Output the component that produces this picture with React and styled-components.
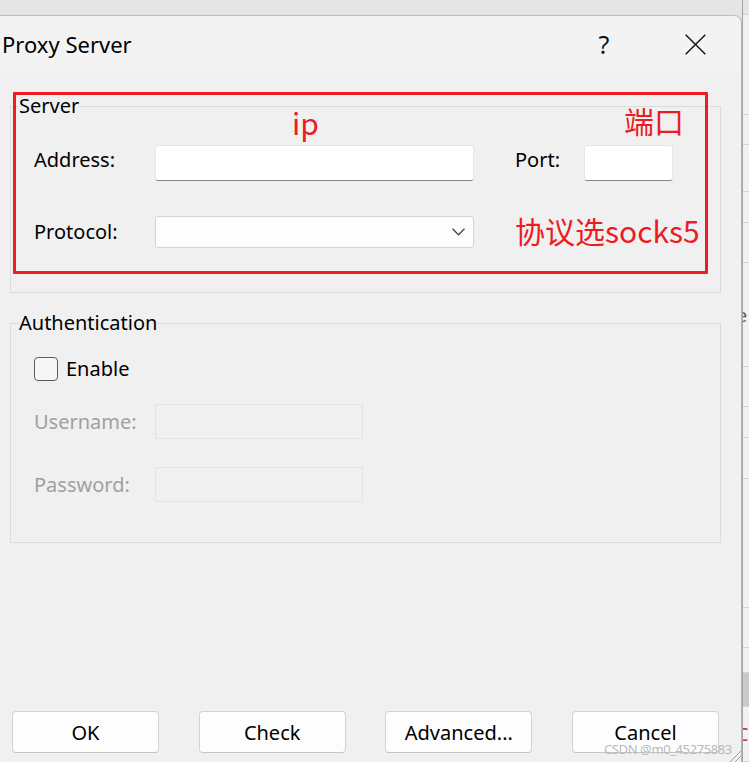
import styled, { createGlobalStyle } from "styled-components";

const GlobalStyle = createGlobalStyle`
  html, body {
    margin: 0;
    padding: 0;
    background: #e5e5e5;
  }
  body {
    font-family: "Noto Sans", "Noto Sans CJK SC", sans-serif;
    color: #000;
  }
  * {
    box-sizing: border-box;
  }
`;

const Screen = styled.div`
  width: 749px;
  height: 762px;
  display: flex;
  align-items: flex-start;
  overflow: hidden;
  background: #e5e5e5;
`;

const Dialog = styled.div`
  position: relative;
  flex: none;
  width: 742px;
  height: 747px;
  margin-top: 15px;
  display: flex;
  flex-direction: column;
  background: #f0f0f0;
  border-top: 1px solid #bdbdbd;
  border-right: 1px solid #b4b4b4;
  border-top-right-radius: 8px;
  overflow: hidden;
`;

const TitleBar = styled.div`
  height: 56px;
  display: flex;
  align-items: center;
  padding: 0 23px 0 2px;
  background: #f3f3f3;
`;

const Title = styled.div`
  flex: 1;
  font-size: 22px;
`;

const CaptionButton = styled.button`
  width: 46px;
  height: 40px;
  margin-left: ${(props) => props.$gap || 0}px;
  display: flex;
  align-items: center;
  justify-content: center;
  padding: 0;
  border: 0;
  background: none;
  font-family: inherit;
  font-size: 25px;
  color: #111;
`;

const Body = styled.div`
  flex: 1;
  display: flex;
  flex-direction: column;
  padding: 22px 20px 9px 10px;
`;

const GroupBox = styled.fieldset`
  margin: ${(props) => props.$top || 0}px 0 0;
  padding: ${(props) => props.$pad};
  min-width: 0;
  border: 1px solid #dcdcdc;
`;

const Legend = styled.legend`
  padding: 0;
  font-size: 20px;
  line-height: 24px;
`;

const ServerGrid = styled.div`
  margin-left: 15px;
  display: grid;
  grid-template-columns: 121px 319px 41px 69px 89px;
  grid-template-rows: 36px 32px;
  row-gap: 35px;
  align-items: center;
`;

const Label = styled.span`
  font-size: 20px;
  line-height: 24px;
  white-space: nowrap;
  color: ${(props) => (props.$disabled ? "#a0a0a0" : "#000")};
  margin-bottom: ${(props) => props.$lift || 0}px;
`;

const TextBox = styled.div`
  height: 36px;
  background: #fff;
  border: 1px solid #e6e6e6;
  border-bottom: 1px solid #868686;
  border-radius: 3px;
`;

const Select = styled.div`
  height: 32px;
  display: flex;
  align-items: center;
  justify-content: flex-end;
  padding-right: 8px;
  background: #fdfdfd;
  border: 1px solid #d3d3d3;
  border-radius: 3px;
`;

const AuthBody = styled.div`
  margin-left: 15px;
  display: flex;
  flex-direction: column;
`;

const CheckRow = styled.label`
  height: 25px;
  display: flex;
  align-items: center;
  gap: 8px;
  font-size: 20px;
`;

const CheckBox = styled.span`
  width: 24px;
  height: 24px;
  border: 1.5px solid #5c5c5c;
  border-radius: 4px;
  background: #f6f6f6;
`;

const FieldRow = styled.div`
  margin-top: ${(props) => props.$top}px;
  height: 35px;
  display: grid;
  grid-template-columns: 121px 208px;
  align-items: center;
`;

const DisabledBox = styled.div`
  height: 35px;
  border: 1px solid #e2e2e2;
  background: #f0f0f0;
`;

const ButtonRow = styled.div`
  margin-top: auto;
  padding: 0 2px;
  display: flex;
  justify-content: space-between;
`;

const Button = styled.button`
  width: 147px;
  height: 42px;
  padding: 0;
  background: #fdfdfd;
  border: 1px solid #d2d2d2;
  border-bottom-color: #c4c4c4;
  border-radius: 4px;
  font-family: inherit;
  font-size: 20px;
  color: #000;
`;

const Marker = styled.div`
  position: absolute;
  top: 76px;
  left: 13px;
  width: 695px;
  height: 182px;
  border: 3px solid #ed1c24;
  border-radius: 1px;
  pointer-events: none;
`;

const Note = styled.div`
  position: absolute;
  top: ${(props) => props.$top}px;
  left: ${(props) => props.$left}px;
  font-family: "Noto Sans CJK SC", sans-serif;
  font-size: 30px;
  line-height: 30px;
  color: #ed1c24;
  white-space: nowrap;
`;

const Watermark = styled.div`
  position: absolute;
  left: 604px;
  top: 725px;
  font-size: 13px;
  line-height: 16px;
  letter-spacing: -0.4px;
  color: #bababa;
  white-space: nowrap;
`;

const Grip = styled.svg`
  position: absolute;
  right: 0;
  bottom: 0;
`;

const BackWindow = styled.div`
  flex: none;
  width: 7px;
  height: 762px;
  display: flex;
  flex-direction: column;
  background: #f2f2f2;
  border-left: 1px solid #a4a4a4;
  overflow: hidden;
`;

const StripCell = styled.div`
  flex: none;
  height: ${(props) => props.$h}px;
  background: ${(props) => props.$bg || "transparent"};
  border-bottom: 1px solid #d4d4d4;
  font-size: 18px;
  line-height: ${(props) => props.$h}px;
  color: ${(props) => props.$ink || "#555"};
  text-indent: -6px;
  white-space: nowrap;
`;

const strip = [
  { h: 15, bg: "#e5e5e5" },
  { h: 100 },
  { h: 30 },
  { h: 47 },
  { h: 31 },
  { h: 40 },
  { h: 104, text: "e" },
  { h: 40 },
  { h: 31 },
  { h: 41 },
  { h: 129 },
  { h: 40 },
  { h: 25 },
  { h: 34, bg: "#c9c9c9" },
  { h: 55, text: "C", ink: "#d22" },
];

const Chevron = () => (
  <svg width="13" height="8" viewBox="0 0 13 8">
    <path d="M0.5 0.8 L6.5 6.8 L12.5 0.8" fill="none" stroke="#444" strokeWidth="1.3" />
  </svg>
);

const CloseIcon = () => (
  <svg width="21" height="21" viewBox="0 0 21 21">
    <path d="M0.7 0.7 L20.3 20.3 M20.3 0.7 L0.7 20.3" stroke="#111" strokeWidth="1.4" />
  </svg>
);

const App = () => {
  return (
    <Screen>
      <GlobalStyle />
      <Dialog>
        <TitleBar>
          <Title>Proxy Server</Title>
          <CaptionButton>?</CaptionButton>
          <CaptionButton $gap={45}>
            <CloseIcon />
          </CaptionButton>
        </TitleBar>

        <Body>
          <GroupBox $pad="27px 0 44px 8px">
            <Legend>Server</Legend>
            <ServerGrid>
              <Label $lift={6}>Address:</Label>
              <TextBox />
              <span />
              <Label $lift={6}>Port:</Label>
              <TextBox />
              <Label>Protocol:</Label>
              <Select>
                <Chevron />
              </Select>
            </ServerGrid>
          </GroupBox>

          <GroupBox $top={18} $pad="21px 0 40px 8px">
            <Legend>Authentication</Legend>
            <AuthBody>
              <CheckRow>
                <CheckBox />
                Enable
              </CheckRow>
              <FieldRow $top={23}>
                <Label $disabled>Username:</Label>
                <DisabledBox />
              </FieldRow>
              <FieldRow $top={28}>
                <Label $disabled>Password:</Label>
                <DisabledBox />
              </FieldRow>
            </AuthBody>
          </GroupBox>

          <ButtonRow>
            <Button>OK</Button>
            <Button>Check</Button>
            <Button>Advanced...</Button>
            <Button>Cancel</Button>
          </ButtonRow>
        </Body>

        <Marker />
        <Note $top={91} $left={292}>ip</Note>
        <Note $top={89} $left={624}>端口</Note>
        <Note $top={199} $left={515}>协议选socks5</Note>

        <Watermark>CSDN @m0_45275883</Watermark>
        <Grip width="12" height="12" viewBox="0 0 12 12">
          <path d="M12 1 L1 12 M12 6 L6 12" stroke="#9a9a9a" strokeWidth="1" />
        </Grip>
      </Dialog>

      <BackWindow>
        {strip.map((cell, i) => (
          <StripCell key={i} $h={cell.h} $bg={cell.bg} $ink={cell.ink}>
            {cell.text}
          </StripCell>
        ))}
      </BackWindow>
    </Screen>
  );
};

export default App;
